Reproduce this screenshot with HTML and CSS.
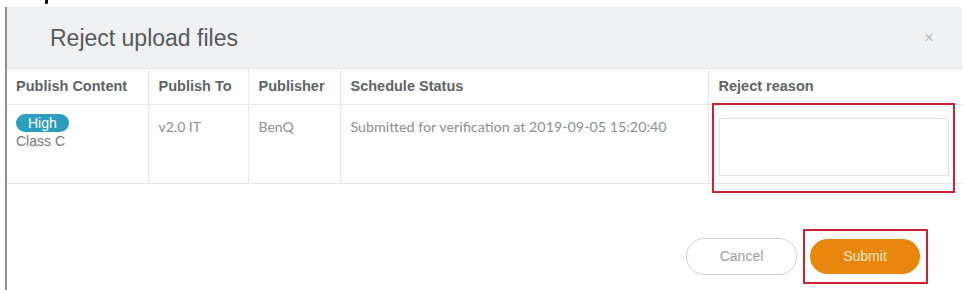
FILE: index.html
```html
<!DOCTYPE html>
<html>
<head>
<meta charset="utf-8">
<link rel="stylesheet" href="styles.css">
</head>
<body>
<div class="page">
  <div class="cap"><span class="tick"></span></div>
  <div class="dialog">
    <div class="head">
      <h1 class="title">Reject upload files</h1>
      <span class="close">×</span>
    </div>
    <table class="grid">
      <colgroup>
        <col class="c1"><col class="c2"><col class="c3"><col class="c4"><col class="c5">
      </colgroup>
      <thead>
        <tr>
          <th>Publish Content</th>
          <th>Publish To</th>
          <th>Publisher</th>
          <th>Schedule Status</th>
          <th>Reject reason</th>
        </tr>
      </thead>
      <tbody>
        <tr>
          <td><span class="badge">High</span><div class="cls">Class C</div></td>
          <td>v2.0 IT</td>
          <td>BenQ</td>
          <td class="status">Submitted for verification at 2019-09-05 15:20:40</td>
          <td class="reason"><div class="mark-box"></div><textarea class="ta"></textarea></td>
        </tr>
      </tbody>
    </table>
    <div class="foot">
      <button class="btn cancel">Cancel</button>
      <span class="submit-wrap"><button class="btn submit">Submit</button></span>
    </div>
  </div>
</div>
</body>
</html>
```

FILE: styles.css
```css
html, body {
  margin: 0;
  padding: 0;
  background: #fff;
}
body {
  width: 965px;
  height: 290px;
  overflow: hidden;
  font-family: Lato, "Liberation Sans", sans-serif;
}
.page {
  margin-left: 5px;
  width: 957px;
  height: 290px;
  box-sizing: border-box;
}
.cap {
  height: 7px;
  padding-left: 40px;
}
.tick {
  display: block;
  width: 3px;
  height: 4px;
  background: #111;
  border-radius: 0 0 1px 1px;
}
.dialog {
  border-left: 2px solid #8d8d8d;
  height: 283px;
  box-sizing: border-box;
}
.head {
  height: 62px;
  box-sizing: border-box;
  background: #eff1f2;
  border-bottom: 1px solid #e1e3e4;
  display: flex;
  align-items: center;
  justify-content: space-between;
  padding: 0 28px 0 43px;
}
.title {
  margin: 0;
  font-family: "Liberation Sans", Arial, sans-serif;
  font-weight: normal;
  font-size: 23px;
  color: #555a5e;
  padding-top: 1px;
}
.close {
  font-family: "Liberation Sans", sans-serif;
  font-size: 17px;
  color: #b8bcbf;
}
.grid {
  border-collapse: collapse;
  table-layout: fixed;
  width: 955px;
}
.c1 { width: 141px; }
.c2 { width: 100px; }
.c3 { width: 92px; }
.c4 { width: 368px; }
.c5 { width: 254px; }
.grid th, .grid td {
  border-left: 1px solid #e6e8e9;
  text-align: left;
  vertical-align: top;
  padding: 0 10px;
}
.grid th:first-child, .grid td:first-child {
  border-left: none;
  padding-left: 9px;
}
.grid th {
  height: 35px;
  box-sizing: border-box;
  vertical-align: middle;
  font-family: "Liberation Sans", Arial, sans-serif;
  font-size: 14.5px;
  font-weight: bold;
  color: #606366;
  border-bottom: 1px solid #e6e8e9;
  padding-top: 0;
}
.grid td {
  height: 79px;
  box-sizing: border-box;
  border-bottom: 1px solid #e2e4e5;
  padding-top: 13px;
  font-size: 14px;
  color: #8c8f92;
}
.grid td:first-child {
  padding-top: 9px;
}
.badge {
  display: inline-block;
  background: #2b9dbf;
  color: #fff;
  font-family: "Liberation Sans", Arial, sans-serif;
  font-size: 14px;
  line-height: 18px;
  padding: 0 12px;
  border-radius: 9px;
}
.cls {
  font-family: "Liberation Sans", Arial, sans-serif;
  font-size: 14px;
  color: #76797c;
  line-height: 16px;
  margin-top: 1px;
}
.status {
  color: #96999c;
}
.grid td.status {
  font-size: 14.3px;
}
.grid td.reason {
  position: relative;
  padding-top: 13px;
  padding-right: 14px;
}
.ta {
  display: block;
  width: 230px;
  height: 58px;
  box-sizing: border-box;
  border: 1px solid #e3e5e6;
  resize: none;
  margin: 0;
  background: #fff;
}
.mark-box {
  position: absolute;
  left: 3px;
  top: -2px;
  width: 243px;
  height: 90px;
  box-sizing: border-box;
  border: 2px solid #cf2130;
  pointer-events: none;
}
.foot {
  display: flex;
  justify-content: flex-end;
  align-items: center;
  gap: 13px;
  padding: 54px 42px 0 0;
}
.btn {
  font-family: "Liberation Sans", Arial, sans-serif;
  font-size: 14px;
  border-radius: 18px;
  cursor: pointer;
}
.cancel {
  width: 111px;
  height: 37px;
  background: #fff;
  color: #9a9da0;
  border: 1px solid #cfd2d4;
}
.submit-wrap {
  position: relative;
  display: block;
}
.submit-wrap::after {
  content: "";
  position: absolute;
  left: -7px;
  top: -10px;
  right: -8px;
  bottom: -10px;
  border: 2px solid #cf2130;
}
.submit {
  display: block;
  width: 110px;
  height: 35px;
  background: #e8860e;
  color: #fcecc8;
  border: none;
}
```
